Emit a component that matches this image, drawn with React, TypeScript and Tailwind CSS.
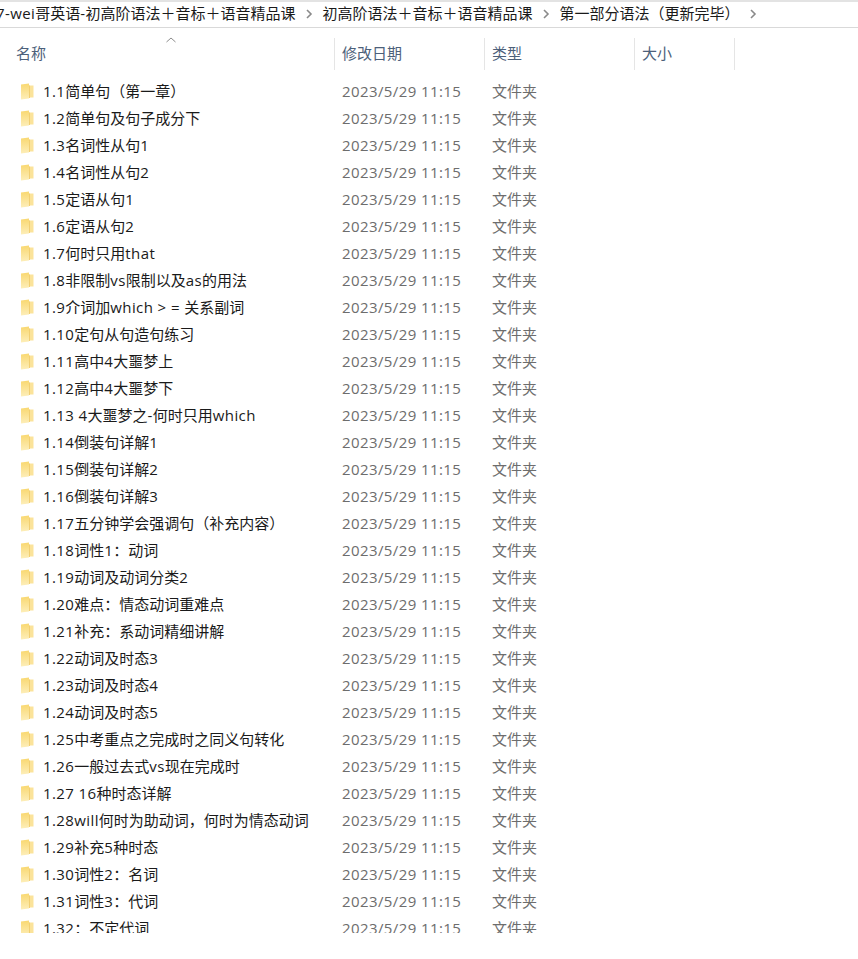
const rows = [
  '1.1简单句（第一章）',
  '1.2简单句及句子成分下',
  '1.3名词性从句1',
  '1.4名词性从句2',
  '1.5定语从句1',
  '1.6定语从句2',
  '1.7何时只用that',
  '1.8非限制vs限制以及as的用法',
  '1.9介词加which > = 关系副词',
  '1.10定句从句造句练习',
  '1.11高中4大噩梦上',
  '1.12高中4大噩梦下',
  '1.13 4大噩梦之-何时只用which',
  '1.14倒装句详解1',
  '1.15倒装句详解2',
  '1.16倒装句详解3',
  '1.17五分钟学会强调句（补充内容）',
  '1.18词性1：动词',
  '1.19动词及动词分类2',
  '1.20难点：情态动词重难点',
  '1.21补充：系动词精细讲解',
  '1.22动词及时态3',
  '1.23动词及时态4',
  '1.24动词及时态5',
  '1.25中考重点之完成时之同义句转化',
  '1.26一般过去式vs现在完成时',
  '1.27 16种时态详解',
  '1.28will何时为助动词，何时为情态动词',
  '1.29补充5种时态',
  '1.30词性2：名词',
  '1.31词性3：代词',
  '1.32：不定代词',
];

const Chevron = ({ className }: { className: string }) => (
  <svg width="8" height="10" viewBox="0 0 8 10" className={className} fill="none">
    <path d="M2 1l4 4-4 4" stroke="#8a8a8a" strokeWidth="1.6" />
  </svg>
);

const FolderIcon = () => (
  <svg width="14" height="17" viewBox="0 0 14 17" className="shrink-0">
    <defs>
      <linearGradient id="folderFront" x1="0" y1="0" x2="0" y2="1">
        <stop offset="0" stopColor="#f9d871" />
        <stop offset="1" stopColor="#fdeeb9" />
      </linearGradient>
    </defs>
    <path d="M8 2.5H13.5V14.5H8Z" fill="#fbe39a" />
    <path d="M1 1.5L9 0.5V15.5L1 16.5Z" fill="url(#folderFront)" />
    <path d="M9 2.5H10V15H9Z" fill="#f2cf72" />
  </svg>
);

// latin runs sit a bit wider than the font gives, CJK stays on its 15px grid
const Mixed = ({ text }: { text: string }) => (
  <>
    {text.split(/([\x20-\x7e]+)/).map((part, i) =>
      i % 2 === 1 ? (
        <span key={i} className="tracking-[0.4px] whitespace-pre">{part}</span>
      ) : (
        part
      )
    )}
  </>
);

const HeaderCell = ({ label, width }: { label: string; width: string }) => (
  <div className={`${width} h-full flex items-center pl-[7px] pb-[2px] border-r border-[#e5e5e5] text-[15px] text-[#4c607a]`}>
    {label}
  </div>
);

const App = () => {
  return (
    <div
      className="w-[858px] h-[959px] bg-white overflow-hidden border-t-2 border-[#e3e3e3]"
      style={{ fontFamily: '"Open Sans", "Noto Sans CJK SC", sans-serif' }}
    >
      {/* Breadcrumb */}
      <div className="h-[26px] flex items-center border-b border-[#d9d9d9] pb-[2px] text-[15px] text-[#1a1a1a] whitespace-nowrap overflow-hidden">
        <span className="-ml-[4px]"><Mixed text="7-wei哥英语-初高阶语法＋音标＋语音精品课" /></span>
        <Chevron className="ml-[9px] mr-[10px]" />
        <span>初高阶语法＋音标＋语音精品课</span>
        <Chevron className="ml-[9px] mr-[10px]" />
        <span>第一部分语法（更新完毕）</span>
        <Chevron className="ml-[9px]" />
      </div>

      {/* Column headers */}
      <div className="relative mt-[10px] h-[32px] flex">
        <svg width="10" height="6" viewBox="0 0 10 6" className="absolute left-[166px] -top-[1px]" fill="none">
          <path d="M0.5 5L5 1l4.5 4" stroke="#8c8c8c" />
        </svg>
        <div className="w-[335px] h-full flex items-center pl-[16px] pb-[2px] border-r border-[#e5e5e5] text-[15px] text-[#4c607a]">
          名称
        </div>
        <HeaderCell label="修改日期" width="w-[150px]" />
        <HeaderCell label="类型" width="w-[150px]" />
        <HeaderCell label="大小" width="w-[100px]" />
      </div>

      {/* File rows */}
      <div className="mt-[8px] h-[855px] overflow-hidden flex flex-col">
        {rows.map((name) => (
          <div key={name} className="h-[27px] shrink-0 flex items-center text-[15px] whitespace-nowrap">
            <div className="w-[342px] flex items-center pl-[20px] gap-[9px] text-[#1a1a1a]">
              <FolderIcon />
              <span><Mixed text={name} /></span>
            </div>
            <div className="w-[150px] text-[#6d6d6d] tracking-[0.4px]">2023/5/29 11:15</div>
            <div className="text-[#6d6d6d]">文件夹</div>
          </div>
        ))}
      </div>
    </div>
  );
};

export default App;
